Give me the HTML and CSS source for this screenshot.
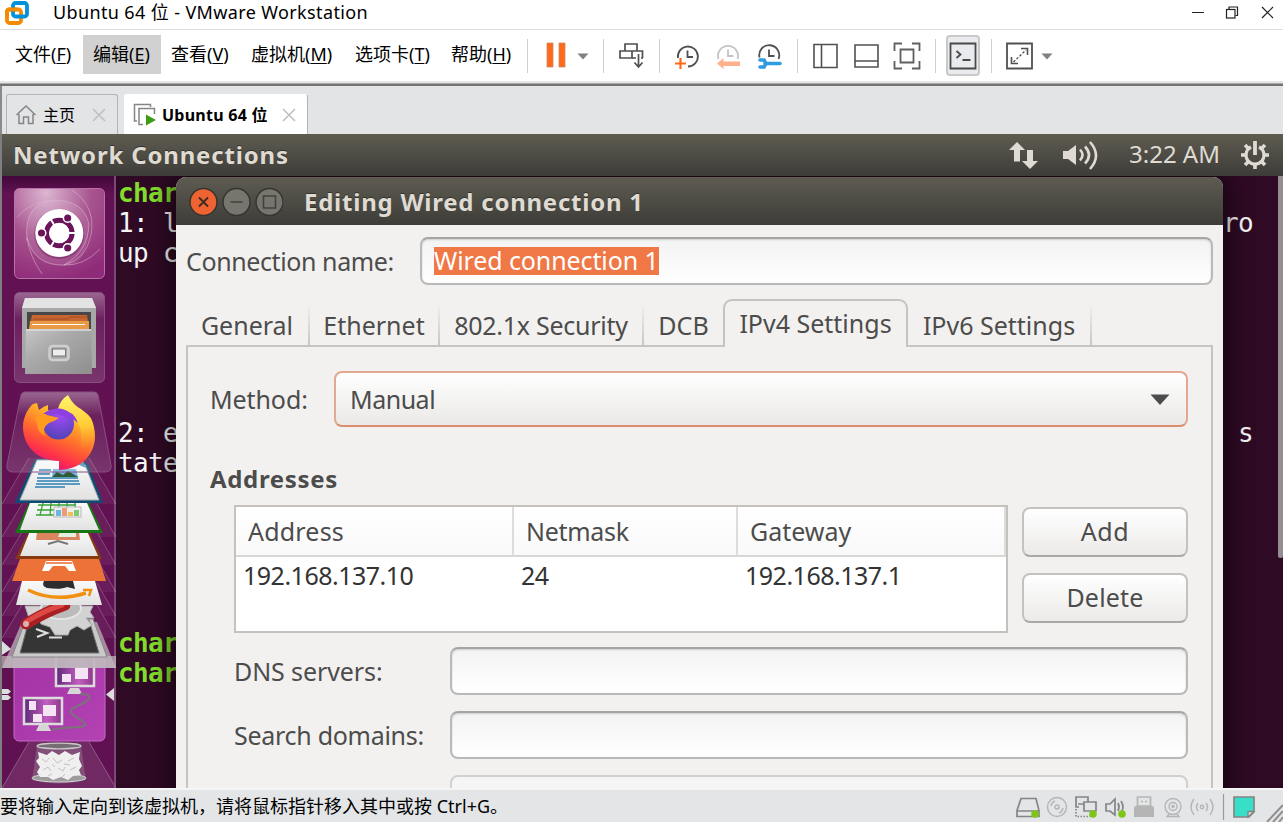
FILE: index.html
```html
<!DOCTYPE html>
<html lang="zh-CN">
<head>
<meta charset="utf-8">
<title>Ubuntu 64 位 - VMware Workstation</title>
<link rel="stylesheet" href="styles.css">
</head>
<body>
<header class="titlebar">
  <svg class="logo" width="26" height="26" viewBox="0 0 26 26" fill="none" stroke-width="3.800"><rect x="3" y="9.500" width="14" height="13.500" rx="2.500" stroke="#f38b00"/><rect x="9" y="3" width="14" height="13.500" rx="2.500" stroke="#0091da"/><path d="M3 16v-4Q3 9.500 5.500 9.500H13" stroke="#f38b00"/></svg>
  <span class="wtitle">Ubuntu 64 位 - VMware Workstation</span>
  <svg class="winctl" width="90" height="26" viewBox="1190 0 90 26" fill="none" stroke="#222" stroke-width="1.2"><path d="M1192 12.500h12M1262 7l11 11M1273 7l-11 11"/><rect x="1226.500" y="9.500" width="8.500" height="8.500"/><path d="M1229 9V7h8.500v8.500h-2"/></svg>
</header>
<nav class="toolbar">
  <span class="mi m1">文件(<u>F</u>)</span><span class="mi m2">编辑(<u>E</u>)</span><span class="mi m3">查看(<u>V</u>)</span><span class="mi m4">虚拟机(<u>M</u>)</span><span class="mi m5">选项卡(<u>T</u>)</span><span class="mi m6">帮助(<u>H</u>)</span>
  <i class="sep s1"></i>
  <svg class="pause" width="20" height="26" viewBox="0 0 20 26"><path d="M1 1h6v24H1zM13 1h6v24h-6z" fill="#ff6a1a" stroke="#c98a62" stroke-width=".8"/></svg>
  <svg class="car1" width="12" height="7" viewBox="0 0 12 7"><path d="M.5.5h11L6 6.500z" fill="#808080"/></svg>
  <i class="sep s2"></i>
  <svg class="send" width="28" height="28" viewBox="0 0 28 28" fill="none" stroke="#505050" stroke-width="1.700"><path d="M7 2h12v7H7zM2 9h12v7H2zM14 16V9h10.500v7"/><path d="M20.500 12v13M16.500 20.500l4 4.500 4-4.500M14 16h4M23 16h2"/></svg>
  <i class="sep s3"></i>
  <svg class="clk1" width="26" height="28" viewBox="0 0 26 28" fill="none"><path d="M4 16A10 10 0 1 1 14 24.500M13.500 8.500V15H19" stroke="#505050" stroke-width="1.800"/><path d="M1 21.500h11M6.500 16v11" stroke="#ff6a1a" stroke-width="2.200"/></svg>
  <svg class="clk2" width="26" height="28" viewBox="0 0 26 28" fill="none"><path d="M2.500 17A10 10 0 1 1 21.500 17M12 7.500V14H17.500" stroke="#c4c4c4" stroke-width="1.800"/><path d="M1 21.500L7.500 16v3.500H24v4.500H7.500V27z" fill="#ffb18c"/></svg>
  <svg class="clk3" width="26" height="28" viewBox="0 0 26 28" fill="none"><path d="M2.500 15.500A10 10 0 1 1 21.500 17M12 7.500V14H17.500" stroke="#505050" stroke-width="1.800"/><path d="M3 18h4l2 3.500L7 25H3M8 21.500h15" stroke="#2f9be0" stroke-width="3.600" stroke-linecap="round"/></svg>
  <i class="sep s4"></i>
  <svg class="pn1" width="27" height="28" viewBox="0 0 27 28" fill="none" stroke="#505050" stroke-width="1.600"><path d="M2 2.500h23v23H2zM9.500 2v24"/></svg>
  <svg class="pn2" width="27" height="28" viewBox="0 0 27 28" fill="none" stroke="#505050" stroke-width="1.600"><path d="M2 3h23v22H2zM2 19h23"/></svg>
  <svg class="pn3" width="28" height="28" viewBox="0 0 28 28" fill="none" stroke="#606060" stroke-width="1.800"><path d="M1.500 9V1.500H9M19 1.500h7.500V9M26.500 19v7.500H19M9 26.500H1.500V19M7.500 7.500h13v13h-13z"/></svg>
  <i class="sep s5"></i>
  <span class="tbtn"><svg width="28" height="28" viewBox="0 0 28 28" fill="none" stroke="#4a4a4a" stroke-width="1.800"><path d="M1.500 1.500h25v25h-25zM7.500 9l4 3.500-4 3.500M13.500 18h8"/></svg></span>
  <i class="sep s6"></i>
  <svg class="rsz" width="29" height="28" viewBox="0 0 29 28" fill="none" stroke="#505050" stroke-width="1.800"><path d="M2 1.500h25v25H2z"/><path d="M16 6.500h6.500V13M13 21.500H6.500V15" stroke-width="1.600"/><path d="M8.500 20L21 8" stroke-width="1.300" stroke-dasharray="2.500 1.700"/></svg>
  <svg class="car2" width="12" height="7" viewBox="0 0 12 7"><path d="M.5.5h11L6 6.500z" fill="#808080"/></svg>
</nav>
<div class="vmtabs">
  <div class="vt home"><svg width="22" height="22" viewBox="0 0 22 22" fill="none" stroke="#858585" stroke-width="1.500"><path d="M1.500 11L11 2l9.500 9M4 10v9.500h4.500V13h5v6.500H18V10"/></svg><span>主页</span><svg class="x" width="14" height="14" viewBox="0 0 14 14" stroke="#bfc0c1" stroke-width="1.600"><path d="M1 1l12 12M13 1L1 13"/></svg></div>
  <div class="vt active"><svg width="24" height="24" viewBox="0 0 24 24" fill="none" stroke="#858585" stroke-width="1.500"><path d="M4 18H1.500V1.500h16V4M10 21.500H6v-16h15.500V11"/><path d="M13 11.500v11l10-5.500z" fill="#3f9c17" stroke="none"/></svg><span>Ubuntu 64 位</span><svg class="x" width="14" height="14" viewBox="0 0 14 14" stroke="#bfc0c1" stroke-width="1.600"><path d="M1 1l12 12M13 1L1 13"/></svg></div>
</div>
<main class="guest">
  <div class="panel">
    <span class="ptitle">Network Connections</span>
    <svg width="90" height="32" viewBox="1008 139 90 32" fill="#dfdbd2"><path d="M1017 142l8 8h-5v11.500h-6V150h-5zM1030 169l-8-8h5v-11h6v11h5z"/><path d="M1063 151h5l8-6v20l-8-6h-5z"/><g fill="none" stroke="#dfdbd2" stroke-width="2.600"><path d="M1080 149.500q5 5.500 0 11M1085 146.500q8 8.500 0 17M1090 142q12 13.500 0 27"/></g></svg>
    <span class="time">3:22 AM</span>
    <svg class="gear" width="30" height="30" viewBox="-15 -15 30 30" fill="none" stroke="#dfdbd2"><path d="M-4-8A9 9 0 1 0 4-8" stroke-width="3.200"/><path d="M0-14V0" stroke-width="3.800"/><path d="M-7-7l-3-3M7-7l3-3M-10 0h-4M10 0h4M-7 7l-3 3M7 7l3 3M0 10v4" stroke-width="3.600"/></svg>
  </div>
  <div class="desktop">
    <svg class="launcher" width="114" height="612" viewBox="2 176 114 612">
      <defs>
        <linearGradient id="bg" x1="0" y1="0" x2="0" y2="1"><stop offset="0" stop-color="#42083a"/><stop offset=".03" stop-color="#621253"/><stop offset="1" stop-color="#601152"/></linearGradient>
        <radialGradient id="ub" cx=".35" cy=".05" r="1"><stop offset="0" stop-color="#dcb6d2"/><stop offset=".5" stop-color="#a8558f"/><stop offset="1" stop-color="#8f2b79"/></radialGradient>
        <linearGradient id="tile" x1="0" y1="0" x2="0" y2="1"><stop offset="0" stop-color="#fff" stop-opacity=".36"/><stop offset=".3" stop-color="#fff" stop-opacity=".06"/><stop offset="1" stop-color="#fff" stop-opacity=".15"/></linearGradient>
        <linearGradient id="cab" x1="0" y1="0" x2="1" y2="1"><stop offset="0" stop-color="#c6c6c6"/><stop offset=".4" stop-color="#a9a9a9"/><stop offset="1" stop-color="#8e8e8e"/></linearGradient>
        <linearGradient id="ff" x1=".85" y1="0" x2=".4" y2="1"><stop offset="0" stop-color="#fff04d"/><stop offset=".35" stop-color="#ffb02a"/><stop offset=".6" stop-color="#ff6a2e"/><stop offset=".82" stop-color="#ff3348"/><stop offset="1" stop-color="#e8117c"/></linearGradient>
        <linearGradient id="fy" x1=".4" y1="0" x2=".5" y2="1"><stop offset="0" stop-color="#fff36a"/><stop offset=".6" stop-color="#ffc933"/><stop offset="1" stop-color="#ff8a2a" stop-opacity="0"/></linearGradient>
        <radialGradient id="gl" cx=".55" cy=".2" r=".8"><stop offset="0" stop-color="#a44af5"/><stop offset="1" stop-color="#5143b8"/></radialGradient>
        <linearGradient id="pap" x1="0" y1="0" x2="0" y2="1"><stop offset="0" stop-color="#fafafa"/><stop offset="1" stop-color="#e2e2e2"/></linearGradient>
        <linearGradient id="net" x1="0" y1="0" x2="1" y2="1"><stop offset="0" stop-color="#a333a6"/><stop offset="1" stop-color="#b342b3"/></linearGradient>
        <linearGradient id="scr" x1="0" y1="0" x2="1" y2="0"><stop offset="0" stop-color="#5b2a78"/><stop offset=".6" stop-color="#c45ec0"/><stop offset="1" stop-color="#8b3789"/></linearGradient>
      </defs>
      <path d="M2 176h112v612H2z" fill="url(#bg)"/>
      <path d="M114 176h2v612h-2z" fill="#7d4877"/>
      <rect x="14.500" y="188.500" width="90" height="90" rx="5" fill="url(#ub)" stroke="#b772a8"/>
      <path d="M27 241Q23 201 56 200 84 201 89 224 88 270 60 265 35 266 27 238z" fill="#fff" fill-opacity=".1"/>
      <g fill="none" stroke="#dcb4d1" stroke-opacity=".55"><path d="M27 241Q23 201 56 200 84 201 89 224M72 190Q96 206 91 235 86 260 64 265 35 266 27 238M42 274Q30 257 27 238M17 217Q32 200 56 200M89 224Q88 252 64 265M100 249Q84 266 64 265"/></g>
      <circle cx="59.300" cy="234" r="25" fill="#5a1049" fill-opacity=".35"/>
      <circle cx="59.300" cy="233" r="24" fill="#fff"/>
      <circle cx="59.300" cy="233" r="12.800" fill="none" stroke="#6a1459" stroke-width="5"/>
      <path d="M59 233h17M59 233l-9-15M59 233l-9 15" stroke="#fff" stroke-width="2"/><circle cx="59.300" cy="233" r="10" fill="#fff"/>
      <g fill="#6a1459" stroke="#fff" stroke-width="1.500"><circle cx="41.500" cy="233" r="4.300"/><circle cx="67.700" cy="218" r="4.300"/><circle cx="67.700" cy="248" r="4.300"/></g>

      <rect x="14.500" y="292.500" width="90" height="90" rx="5" fill="url(#tile)" stroke="#8a4f82"/>
      <path d="M25 298h67l4 10v60H22v-60z" fill="#a8a8a8"/><path d="M25 298h67l4 10H22z" fill="#e3e3e3"/><path d="M27 312h64v18H27z" fill="#474747"/>
      <path d="M32 315h55l2 15H29z" fill="#c8662f"/><path d="M30 321h59v9H29z" fill="#e99a45"/><path d="M32 324.500h53" stroke="#fff"/><path d="M33 319h35l2-2h18" stroke="#a44a24" fill="none"/>
      <path d="M26 329h65l1 45H25z" fill="url(#cab)"/><path d="M26 330h65" stroke="#ddd" stroke-width="1.500"/>
      <rect x="49.500" y="346" width="19" height="14" rx="3" fill="#aaa" stroke="#cfcfcf" stroke-width="2.500"/><rect x="52.500" y="349" width="13" height="7" fill="#eee" stroke="#777"/>

      <g fill="#fff" fill-opacity=".05"><path d="M29 458h60l27 46H2zM22 504h75l19 33H2zM22 532h75l19 33H2zM22 559h75l19 33H2zM22 583h75l19 33H2zM22 605h75l19 33H2z"/></g>
      <path d="M29 458L2 504M89 458l27 46M22 504L2 537M97 504l19 33M22 532L2 565M97 532l19 33M22 559L2 592M97 559l19 33M22 583L2 616M97 583l19 33M22 605L2 638M97 605l19 33" stroke="#fff" stroke-opacity=".22"/>

      <rect x="14" y="656" width="91" height="85" rx="5" fill="url(#net)" stroke="#c36cc5"/>
      <path d="M56 655h38v31H56z" fill="url(#scr)" stroke="#dcdcdc" stroke-width="2.500"/><path d="M62 674h9v8h-9zM75 667h13v12H75z" fill="#f4e4f4"/><path d="M70 688h9l3 6H67z" fill="#d6d6d6"/>
      <path d="M24 698h38v26H24z" fill="url(#scr)" stroke="#dcdcdc" stroke-width="2.500"/><path d="M29 701h7v9h-7zM43 705h13v11H43zM33 714h9v8h-9z" fill="#f4e4f4"/><path d="M39 725h9l3 6H36z" fill="#d6d6d6"/>
      <path d="M80 694q13 0 8 6c-7 6-18 7-17 12 2 6 15 8 14 13-2 4-21 1-33 5" fill="none" stroke="#777" stroke-width="1.800"/>
      <path d="M114 688v13l-8-6.500z" fill="#ddd"/><path d="M2 689h6l3 2.500-3 2.500H2zM2 695h6l3 2.500-3 2.500H2z" fill="#ddd"/>

      <path d="M22 622h75l19 46H2z" fill="#b5aab3" fill-opacity=".8"/><path d="M2 656h114v12H2z" fill="#c4bcc2" fill-opacity=".7"/>
      <path d="M26 619h67l14 38H12z" fill="#c9c9c9" stroke="#888"/><path d="M29 620h60l10 33H20z" fill="#353535" stroke="#777"/><path d="M36 629l11 4-10 4M49 637.500h13" fill="none" stroke="#ddd" stroke-width="2.200"/><path d="M2 641l9 8-9 6z" fill="#ddd"/>

      <path d="M25 606l68 0-3 6 4 6-8 0 6 7-8 5-7-4-7 4-2 5H55l-5-8-9-3-3-8-9 2z" fill="#d3d3d3" stroke="#aaa"/><ellipse cx="61" cy="608" rx="20" ry="11" fill="#bbb" stroke="#e4e4e4" stroke-width="2"/>
      <path d="M26 624Q45 612 65 605" stroke="#a91f22" stroke-width="11" stroke-linecap="round"/><path d="M26 622Q45 610 62 605" stroke="#dd4a46" stroke-width="5" stroke-linecap="round"/><circle cx="26" cy="624" r="3" fill="#d9b4b0"/>

      <path d="M22 581h73l7 24H16z" fill="url(#pap)"/><path d="M44 581h29l2 8-8-2q-6 3-20 1-6-2-3-7z" fill="#2d2d2d"/><path d="M28 590q27 13 58 3" fill="none" stroke="#f29111" stroke-width="3.500"/><path d="M83 590h8l-2 6" fill="none" stroke="#f29111" stroke-width="2.500"/>
      <path d="M20 559h79l7 22H12z" fill="#ec7238"/><path d="M46 561h26l4 10h-7l-4-5H53l-4 5h-7z" fill="#fff"/><path d="M46 563h26" stroke="#e86a30" stroke-width="1.500"/>
      <path d="M29 531h60l13 28H15z" fill="#873a10"/><path d="M30 531h57l11 25H20z" fill="url(#pap)"/><path d="M37 531h42l1 9H36z" fill="#db8560"/><path d="M60 532h16v5H58z" fill="#e5efdf"/><path d="M48 544l10-3 10 3" fill="none" stroke="#777" stroke-width="2"/>
      <path d="M29 503h60l14 30H15z" fill="#197616"/><path d="M30 503h57l12 27H20z" fill="url(#pap)"/><path d="M38 505h38M37 510h20M36 515h18M43 503l-3 12M51 503l-1 12M59 503v5M67 503v4M75 503v4" stroke="#37a334" stroke-width="1.300"/><rect x="54" y="507" width="27" height="10" fill="#eee" stroke="#bbb"/><path d="M56 510h5v6h-5z" fill="#6bb5e5"/><path d="M62 508h5v8h-5z" fill="#ef9a70"/><path d="M68 512h5v4h-5z" fill="#ecc05e"/><path d="M74 510h5v6h-5z" fill="#7dcc74"/>
      <path d="M35 459h36l17 5 15 39H15z" fill="#0d4d75"/><path d="M37 460h34l14 5 14 35H20z" fill="url(#pap)" stroke="#aaa"/><path d="M70 461h13l3 7z" fill="#4e94bb"/><path d="M39 470h12M38 474h12M37 478h41M37 481h42M36 484h44M35 487h30" stroke="#2b80b2" stroke-width="1.500"/><path d="M53 469h23l2 8H52z" fill="#6fb5e0"/><path d="M52 477l5-5 6 3 5-4 10 6z" fill="#2e5a34"/>

      <path d="M25 392h69q3 0 4 3l13 70q1 7-6 7H13q-7 0-6-7l14-70q1-3 4-3z" fill="url(#tile)" stroke="#8a4f82"/>
      <path d="M59 461c-20 0-36-14-36-34 0-10 5-19 10-23l4-1 2 7q5-4 9-5v5q5 0 9 3l11-16q4 9 11 13l7 7 4 2c4 5 5 12 5 17 0 20-16 34-36 34z" fill="url(#ff)"/>
      <path d="M58 409q2-9 10-14 5 10 13 14l5 4q11 8 6 26-5 10-13 12 4-14 1-24-6-13-22-18z" fill="url(#fy)"/>
      <circle cx="58.500" cy="424" r="15.500" fill="url(#gl)"/>
      <path d="M43 414q7-6 17-5 14 2 18 14-6-6-13-6-8-4-17-3z" fill="#8d3fe0"/>
      <path d="M34 418q7-4 13-3l12 3-5 3-5 2q-5 3-5 8 0 4 2 6-9-5-9-14-1-3-3-5z" fill="#ff9b1f"/>

      <path d="M29 742h60l27 46H2z" fill="#fff" fill-opacity=".1"/><path d="M29 742L2 788M89 742l27 46" stroke="#8f5a88"/>
      <path d="M37 746h44l5 34q-27 7-54 0z" fill="#aaa" fill-opacity=".3"/><ellipse cx="59" cy="746" rx="22" ry="2.800" fill="#766c73" stroke="#c9c9c9" stroke-width="1.300"/><ellipse cx="59" cy="778" rx="27" ry="4" fill="#9c9c9c" stroke="#d5d5d5"/>
      <path d="M38 752l9 3 5-4 7 4 6-4 7 4 8-3-1 7 3 7-3 4 2 5-8 1-5 4-7-3-8 3-5-3-8 0-3-5 3-5-4-6 3-3z" fill="#efefef"/><path d="M42 759l4 3 3-4M53 758l4 5 5-3M68 761l6-3M43 770l5-3 3 4M58 768l5 3 2-4M70 770l6-3M52 764l3 3M64 764l6 1M48 776l4-2M62 777l3-3" fill="none" stroke="#c2c2c2"/>
    </svg>
    <section class="terminal">
      <div class="row grn">char</div>
      <div class="row"><span>1: l</span><span>ro</span></div>
      <div class="row">up c</div>
      <div class="row"></div><div class="row"></div><div class="row"></div><div class="row"></div><div class="row"></div>
      <div class="row"><span>2: e</span><span>s</span></div>
      <div class="row">tate</div>
      <div class="row"></div><div class="row"></div><div class="row"></div><div class="row"></div><div class="row"></div>
      <div class="row grn">char</div>
      <div class="row grn">char</div>
      <i class="tscroll"></i>
      <div class="dialog">
        <div class="dtitle">
          <svg width="94" height="30" viewBox="189 187 94 30" fill="none"><g stroke="#35342f" stroke-width="1.500"><circle cx="203.500" cy="202" r="13.500" fill="#ef6333"/><circle cx="236.500" cy="202" r="13.500" fill="#77766e"/><circle cx="269.500" cy="202" r="13.500" fill="#77766e"/></g><path d="M199 197.500l9 9M208 197.500l-9 9" stroke="#3b2a20" stroke-width="1.800"/><path d="M230.500 202h12M263.500 196h12v12h-12z" stroke="#42413b" stroke-width="1.600"/></svg>
          <span>Editing Wired connection 1</span>
        </div>
        <div class="dbody">
          <div class="line name"><label>Connection name:</label><div class="entry"><mark>Wired connection 1</mark></div></div>
          <div class="tabs"><span class="t1">General</span><span class="t2">Ethernet</span><span class="t3">802.1x Security</span><span class="t4">DCB</span><span class="t5 on">IPv4 Settings</span><span class="t6">IPv6 Settings</span><span class="rest"></span></div>
          <div class="page">
            <div class="line method"><label>Method:</label><div class="combo"><span>Manual</span><svg width="20" height="12" viewBox="0 0 20 12"><path d="M.5 1.500h19L10 12z" fill="#4c4c4c"/></svg></div></div>
            <h2>Addresses</h2>
            <div class="addr">
              <div class="table">
                <div class="tr th"><span class="h1">Address</span><span class="h2">Netmask</span><span class="h3">Gateway</span></div>
                <div class="tr td"><span class="ip">192.168.137.10</span><span>24</span><span class="ip">192.168.137.1</span></div>
              </div>
              <div class="btns"><div class="btn add">Add</div><div class="btn del">Delete</div></div>
            </div>
            <div class="line f dns"><label>DNS servers:</label><div class="entry"></div></div>
            <div class="line f sd"><label>Search domains:</label><div class="entry"></div></div>
            <div class="line f"><label></label><div class="entry off"></div></div>
          </div>
        </div>
      </div>
    </section>
  </div>
</main>
<footer class="status">
  <span class="msg">要将输入定向到该虚拟机，请将鼠标指针移入其中或按 Ctrl+G。</span>
  <svg width="270" height="32" viewBox="1013 790 270 32" fill="none" stroke="#858585" stroke-width="1.700">
    <path d="M1021 798.500h15l3 12v6h-22v-6zM1017 811h22"/>
    <g stroke="#b5b5b5" stroke-width="1.400"><circle cx="1057" cy="807" r="9.500"/><circle cx="1057" cy="807" r="2"/><path d="M1051 806q1-4 4-5M1063 808q-1 4-4 5"/></g>
    <path d="M1079 807h-3v-10h12v5M1084 802h12v9h-12zM1078 804h6"/><path d="M1076 809v7.500h14" stroke-dasharray="1.500 1.500"/>
    <path d="M1106 804h4l5-5v16l-5-4h-4zM1118 803q2 4 0 8M1121 801q4 6 0 12"/>
    <path d="M1137.500 797h13v9h-13z" stroke="#b5b5b5"/><path d="M1134 808q0-2 2-2h16q2 0 2 2v9h-20z" fill="#b5b5b5" stroke="none"/><path d="M1141 801.500h2M1145 801.500h2" stroke="#b5b5b5"/>
    <g stroke="#b5b5b5" stroke-width="1.400"><circle cx="1173" cy="806.500" r="8"/><circle cx="1173" cy="806.500" r="4"/><circle cx="1173" cy="806.500" r="1"/><path d="M1169 814l-2 2.500h12l-2-2.500"/><circle cx="1202" cy="807" r="1.700"/><path d="M1198 803q-3 4 0 8M1206 803q3 4 0 8M1194 799q-6 8 0 16M1210 799q6 8 0 16"/></g>
    <path d="M1223.500 794v26" stroke="#9a9a9a" stroke-width="1.200"/>
    <path d="M1234 797h20v15l-5 5h-15z" fill="#37dfc9"/><path d="M1254 811.500h-6V817z" fill="#ddd" stroke-width="1.300"/>
    <g stroke="#8f8f8f" stroke-width="2"><path d="M1267 822l16-17M1273 822l10-11M1279 822l4-5"/></g>
    <g fill="#7ec51a" stroke="none"><circle cx="1035" cy="814" r="3.800"/><circle cx="1093" cy="814" r="3.800"/><circle cx="1122" cy="814" r="3.800"/></g>
  </svg>
</footer>
</body>
</html>
```
FILE: styles.css
```css
* { box-sizing: border-box; }
body { margin: 0; width: 1283px; height: 822px; overflow: hidden; display: flex; flex-direction: column; background: #fff; color: #000; font-family: "Noto Sans", "Noto Sans CJK SC", sans-serif; white-space: nowrap; }
svg { display: block; flex: none; }
.titlebar { height: 30px; flex: none; display: flex; border-bottom: 1px solid #dedede; }
.logo { margin-left: 4px; }
.wtitle { margin-left: 23px; line-height: 25px; font-size: 18px; letter-spacing: .37px; }
.winctl { margin-left: auto; margin-right: 3px; }
.toolbar { height: 56px; flex: none; display: flex; align-items: flex-start; padding: 5px 0 0 5px; border-bottom: 2px solid #747474; box-shadow: inset 0 -1px #aaa, inset 0 -3px #e6e6e6; font-size: 18px; }
.mi { height: 39px; line-height: 38px; padding-left: 10px; }
.mi u { text-underline-offset: 2px; text-decoration-thickness: 1px; }
.m1, .m2 { width: 78px; }
.m2 { background: #d1d1d1; }
.m3 { width: 80px; }
.m4 { width: 104px; }
.m5 { width: 96px; }
.m6 { width: 81px; }
.sep { width: 1px; height: 34px; margin-top: 4px; background: #cfcfcf; }
.s1 { margin-left: 5px; }
.s2, .s4, .s5 { margin-left: 14px; }
.s3 { margin-left: 13px; }
.s6 { margin-left: 11px; }
.toolbar > svg { margin-top: 7px; }
.toolbar > .pause { margin: 7px 0 0 18px; }
.toolbar > .car1 { margin: 18px 0 0 11px; }
.send, .clk1 { margin-left: 14px; }
.clk2 { margin-left: 16px; }
.clk3 { margin-left: 15px; }
.pn1, .pn2 { margin-left: 14px; }
.pn3 { margin-left: 13px; }
.tbtn { width: 34px; height: 41px; margin-left: 10px; border: 2px solid #c9c9c9; border-radius: 4px; background: #e9ebee; display: grid; place-items: center; }
.rsz { margin-left: 13px; }
.toolbar > .car2 { margin: 18px 0 0 7px; }
.vmtabs { height: 48px; flex: none; display: flex; align-items: flex-end; padding-left: 4px; gap: 6px; background: #e3e4e6; border-left: 2px solid #8a8a8a; }
.vt { height: 40px; display: flex; align-items: center; border: 1px solid #b3b4b6; border-bottom: 0; border-radius: 3px 3px 0 0; padding-left: 8px; font-size: 16px; }
.vt span { margin-bottom: 2px; }
.home { width: 112px; }
.home span { margin-left: 6px; }
.vt .x { margin-left: auto; margin-right: 11px; }
.active { width: 184px; background: #fff; border-color: #fff #b3b4b6 #fff #fff; font-weight: bold; }
.active span { margin-left: 5px; letter-spacing: .25px; }
.guest { height: 654px; flex: none; border-left: 2px solid #7f7f82; overflow: hidden; }
.panel { height: 42px; display: flex; align-items: center; padding-left: 11px; background: linear-gradient(#5e5c51, #3d3c38); color: #dfdbd2; font-size: 24px; }
.ptitle { width: 995px; margin-bottom: 2px; font-weight: bold; letter-spacing: .82px; text-shadow: 0 -1px #33322e; }
.time { margin-left: 31px; margin-bottom: 4px; width: 111px; }
.desktop { height: 612px; display: flex; }
.terminal { position: relative; flex: 1; overflow: hidden; background: #2f0a24; color: #f4f4f4; font: 26px/30px "DejaVu Sans Mono", monospace; letter-spacing: -.65px; padding: 2px 30px 0 2px; }
.row { height: 30px; display: flex; justify-content: space-between; }
.grn { color: #83de2c; font-weight: bold; }
.tscroll { position: absolute; right: 0; top: 0; width: 5px; height: 382px; background: #968d93; border-radius: 0 0 2px 2px; }
.dialog { position: absolute; left: 60px; top: 1px; width: 1047px; height: 700px; border-radius: 10px 10px 0 0; overflow: hidden; background: #f2f1ef; box-shadow: 0 0 24px 4px rgba(0,0,0,.6); color: #4c4c4c; font: 25px/34px "Noto Sans", sans-serif; letter-spacing: 0; }
.dtitle { height: 48px; display: flex; align-items: center; padding: 1px 0 0 13px; background: linear-gradient(#5e5c51, #3d3c38); color: #dfdbd2; font-weight: bold; font-size: 24px; letter-spacing: .75px; text-shadow: 0 -1px #33322e; }
.dtitle span { margin-left: 21px; padding-top: 1px; }
.dbody { padding: 12px 10px 0 10px; }
.line { display: flex; align-items: center; }
.line label { flex: none; }
.name label { width: 234px; letter-spacing: -.4px; }
.entry { flex: 1; height: 48px; border: 2px solid #b9b9b9; border-top-color: #a5a5a5; border-radius: 8px; background: linear-gradient(#f3f3f3, #fff); box-shadow: inset 0 1px 2px #ccc; padding: 8px 0 0 12px; display: flex; }
.entry mark { height: 28px; line-height: 27px; background: #f07746; color: #fff; letter-spacing: -.1px; }
.entry.off { border-color: #d0d0d0; background: #f5f5f5; box-shadow: none; }
.tabs { height: 48px; margin-top: 14px; display: flex; align-items: flex-end; }
.tabs span { height: 42px; line-height: 40px; text-align: center; border: 2px solid; border-image: linear-gradient(transparent, #c5c4c2) 2; border-width: 0 2px 2px 0; }
.tabs .t1 { width: 124px; }
.tabs .t2 { width: 130px; }
.tabs .t3 { width: 204px; letter-spacing: -.25px; }
.tabs .t4 { width: 79px; border-right: 0; }
.tabs .t6 { width: 184px; }
.tabs .on { width: 185px; height: 48px; line-height: 44px; border: 2px solid #c5c4c2; border-image: none; border-bottom: 0; border-radius: 9px 9px 0 0; }
.tabs .rest { flex: 1; border-right: 0; }
.page { height: 500px; border: 2px solid #c5c4c2; border-top: 0; padding: 24px 23px 0 22px; }
.method label { width: 124px; letter-spacing: -.1px; }
.combo { flex: 1; height: 56px; border: 2px solid #e3a88f; border-bottom-color: #d98e70; border-radius: 8px; background: linear-gradient(#fff, #eae9e7); display: flex; align-items: center; justify-content: space-between; padding: 0 16px 0 14px; letter-spacing: -.5px; }
.page h2 { margin: 36px 0 9px; font-size: 24px; line-height: 32px; padding-bottom: 1px; letter-spacing: .65px; }
.addr { display: flex; margin-left: 24px; gap: 14px; }
.table { width: 774px; height: 128px; border: 2px solid #c5c1bd; background: #fff; }
.tr { display: grid; grid-template-columns: 278px 224px 1fr; }
.th { height: 50px; line-height: 49px; background: linear-gradient(#fff, #f9f9f9); border-bottom: 2px solid #d9d7d5; }
.th span { padding-left: 12px; border-right: 2px solid #dddcdb; }
.h1 { letter-spacing: .2px; }
.h2 { letter-spacing: -.3px; }
.td { color: #333; line-height: 36px; }
.td span { padding-left: 7px; letter-spacing: -.5px; }
.btns { flex: 1; display: flex; flex-direction: column; gap: 16px; padding-top: 2px; }
.btn { height: 50px; line-height: 45px; text-align: center; border: 2px solid #c3c2c0; border-bottom-color: #aaa9a8; border-radius: 8px; background: linear-gradient(#fff, #ebeae8); }
.add { letter-spacing: .6px; }
.del { letter-spacing: .2px; }
.f { margin: 14px 0 0 24px; }
.f label { width: 216px; letter-spacing: -.1px; }
.sd label { letter-spacing: -.28px; }
.f + .f { margin-top: 16px; }
.status { flex: 1; display: flex; align-items: flex-start; background: #e3e5e7; border-top: 2px solid #f5f5f5; font-size: 18px; }
.msg { flex: 1; line-height: 33px; }
```
